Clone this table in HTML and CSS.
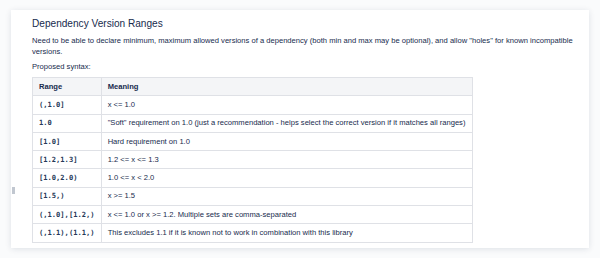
FILE: index.html
```html
<!DOCTYPE html>
<html lang="en">
<head>
    <meta charset="UTF-8">
    <title>Dependency Version Ranges</title>
    <link rel="stylesheet" href="styles.css">
</head>
<body>
    <div class="page">
        <span class="handle"></span>
        <div class="card">
            <h2>Dependency Version Ranges</h2>
            <p>Need to be able to declare minimum, maximum allowed versions of a dependency (both min and max may be optional), and allow "holes" for known incompatible versions.</p>
            <p>Proposed syntax:</p>
            <table class="ranges">
                <thead>
                    <tr><th>Range</th><th>Meaning</th></tr>
                </thead>
                <tbody>
                    <tr><td><code>(,1.0]</code></td><td>x &lt;= 1.0</td></tr>
                    <tr><td><code>1.0</code></td><td>"Soft" requirement on 1.0 (just a recommendation - helps select the correct version if it matches all ranges)</td></tr>
                    <tr><td><code>[1.0]</code></td><td>Hard requirement on 1.0</td></tr>
                    <tr><td><code>[1.2,1.3]</code></td><td>1.2 &lt;= x &lt;= 1.3</td></tr>
                    <tr><td><code>[1.0,2.0)</code></td><td>1.0 &lt;= x &lt; 2.0</td></tr>
                    <tr><td><code>[1.5,)</code></td><td>x &gt;= 1.5</td></tr>
                    <tr><td><code>(,1.0],[1.2,)</code></td><td>x &lt;= 1.0 or x &gt;= 1.2. Multiple sets are comma-separated</td></tr>
                    <tr><td><code>(,1.1),(1.1,)</code></td><td>This excludes 1.1 if it is known not to work in combination with this library</td></tr>
                </tbody>
            </table>
        </div>
    </div>
</body>
</html>
```

FILE: styles.css
```css
body {
    margin: 0;
    background: #fafbfc;
    font-family: 'Liberation Sans', Arial, sans-serif;
    color: #172b4d;
}
.page {
    position: relative;
    padding: 10px 11px 11px 11px;
}
.handle {
    position: absolute;
    left: 12px;
    top: 187px;
    width: 3px;
    height: 7px;
    background: #c1c7d0;
}
.card {
    background: white;
    box-shadow: 0 1px 6px rgba(9, 30, 66, 0.12);
    padding: 8px 10px 5px 21px;
}
h2 {
    font-size: 10.1px;
    line-height: 12px;
    font-weight: 400;
    margin: 0 0 5px 0;
}
p {
    font-size: 7.6px;
    line-height: 11px;
    margin: 0 0 4px 0;
}
.ranges {
    border-collapse: collapse;
    margin-top: 5px;
    width: 441px;
    font-size: 7.6px;
}
.ranges th,
.ranges td {
    border: 1px solid #dfe1e6;
    padding: 0 6px;
    height: 17.3px;
    line-height: 10px;
    text-align: left;
    white-space: nowrap;
}
.ranges th {
    background: #f4f5f7;
    font-weight: bold;
}
code {
    font-family: 'DejaVu Sans Mono', monospace;
    font-size: 7.1px;
    font-weight: bold;
    color: #253858;
}
```
